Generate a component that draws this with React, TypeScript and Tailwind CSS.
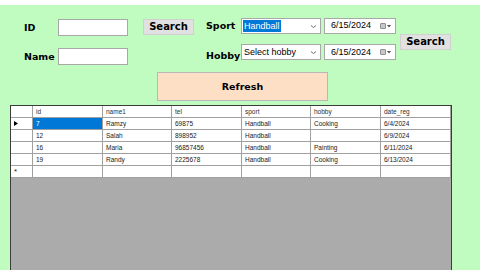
import React from 'react'

type Row = { id: string; name1: string; tel: string; sport: string; hobby: string; date: string }

const rows: Row[] = [
  { id: '7', name1: 'Ramzy', tel: '69875', sport: 'Handball', hobby: 'Cooking', date: '6/4/2024' },
  { id: '12', name1: 'Salah', tel: '898952', sport: 'Handball', hobby: '', date: '6/9/2024' },
  { id: '16', name1: 'Maria', tel: '96857456', sport: 'Handball', hobby: 'Painting', date: '6/11/2024' },
  { id: '19', name1: 'Randy', tel: '2225678', sport: 'Handball', hobby: 'Cooking', date: '6/13/2024' },
]

const cols = ['id', 'name1', 'tel', 'sport', 'hobby', 'date_reg']

const label = "font-['DejaVu_Sans',sans-serif] font-bold text-[9.5px] text-black leading-none"
const sans = "font-['Liberation_Sans',Arial,sans-serif]"

const Chevron = () => (
  <svg width="7" height="5" viewBox="0 0 7 5" className="mr-[3px]">
    <path d="M1 1.5 L3.5 3.5 L6 1.5" fill="none" stroke="#606060" strokeWidth="0.9" />
  </svg>
)

const CalIcon = () => (
  <div className="flex items-center gap-[1px] mr-[4px]">
    <div className="w-[6px] h-[6px] bg-[#c8c8c8] border border-[#909090] rounded-[1px]" />
    <svg width="4" height="3" viewBox="0 0 4 3">
      <path d="M0 0 L4 0 L2 2.5 Z" fill="#505050" />
    </svg>
  </div>
)

const SelectBox = ({ text, selected }: { text: string; selected?: boolean }) => (
  <div className={`w-[80px] h-[16px] bg-white border border-[#a8a8a8] flex items-center justify-between ${sans} text-[9px]`}>
    <span className={`ml-[1px] px-[1px] leading-[12px] ${selected ? 'bg-[#0078d7] text-white' : 'text-black'}`}>{text}</span>
    <Chevron />
  </div>
)

const DateBox = () => (
  <div className={`ml-[3px] w-[72px] h-[16px] bg-white border border-[#a8a8a8] flex items-center justify-between ${sans} text-[9px] text-black`}>
    <span className="ml-[6px]">6/15/2024</span>
    <CalIcon />
  </div>
)

const SearchBtn = ({ className }: { className: string }) => (
  <div className={`w-[51px] h-[16px] bg-[#e1e1e1] border border-[#d0d0d0] flex items-center justify-center ${label} text-[10px] ${className}`}>
    Search
  </div>
)

const TextInput = () => <div className="w-[70px] h-[17px] bg-white border border-[#a8a8a8]" />

const cellW = ['w-[70px]', 'w-[69px]', 'w-[70px]', 'w-[69px]', 'w-[70px]', 'w-[70px]']

export default function App() {
  return (
    <div className="w-[480px] h-[270px] bg-[#c0fcc0] overflow-hidden flex flex-col">
      <div className="h-[5px] bg-white" />

      <div className="h-[67px] flex items-start">
        <div className="ml-[24px] mt-[14px] flex flex-col">
          <div className="flex items-center">
            <span className={`${label} w-[34px]`}>ID</span>
            <TextInput />
          </div>
          <div className="flex items-center mt-[12px]">
            <span className={`${label} w-[34px]`}>Name</span>
            <TextInput />
          </div>
        </div>

        <SearchBtn className="ml-[15px] mt-[14px]" />

        <div className="ml-[12px] mt-[13px] flex flex-col">
          <div className="flex items-center">
            <span className={`${label} w-[35px]`}>Sport</span>
            <SelectBox text="Handball" selected />
            <DateBox />
          </div>
          <div className="flex items-center mt-[10px]">
            <span className={`${label} w-[35px] mt-[7px]`}>Hobby</span>
            <SelectBox text="Select hobby" />
            <DateBox />
          </div>
        </div>

        <SearchBtn className="ml-[4px] mt-[29px]" />
      </div>

      <div className="ml-[157px] w-[171px] h-[29px] bg-[#fddfc6] border border-[#b8b8b8] flex items-center justify-center">
        <span className={`${label}`}>Refresh</span>
      </div>

      <div className={`mt-[4px] ml-[10px] w-[442px] flex-1 border border-[#3c3c3c] border-b-0 bg-[#ababab] flex flex-col ${sans} text-[6.5px] text-[#202020]`}>
        <div className="flex h-[12px] bg-white border-b border-[#a0a0a0]">
          <div className="w-[22px] border-r border-[#a0a0a0]" />
          {cols.map((c, i) => (
            <div key={c} className={`${cellW[i]} border-r border-[#a0a0a0] pl-[3px] flex items-center text-[#303030]`}>
              {c}
            </div>
          ))}
        </div>
        {rows.map((r, ri) => {
          const vals = [r.id, r.name1, r.tel, r.sport, r.hobby, r.date]
          return (
            <div key={r.id} className="flex h-[12px] bg-white border-b border-[#a0a0a0]">
              <div className="w-[22px] border-r border-[#a0a0a0] flex items-center pl-[3px]">
                {ri === 0 && (
                  <svg width="4" height="5" viewBox="0 0 4 5">
                    <path d="M0 0 L4 2.5 L0 5 Z" fill="#000" />
                  </svg>
                )}
              </div>
              {vals.map((v, i) => (
                <div
                  key={i}
                  className={`${cellW[i]} border-r border-[#a0a0a0] pl-[3px] flex items-center ${ri === 0 && i === 0 ? 'bg-[#0078d7] text-white' : ''}`}
                >
                  {v}
                </div>
              ))}
            </div>
          )
        })}
        <div className="flex h-[12px] bg-white border-b border-[#a0a0a0]">
          <div className="w-[22px] border-r border-[#a0a0a0] flex items-center pl-[3px] text-[8px] leading-none">*</div>
          {cols.map((c, i) => (
            <div key={c} className={`${cellW[i]} border-r border-[#a0a0a0]`} />
          ))}
        </div>
      </div>
    </div>
  )
}
